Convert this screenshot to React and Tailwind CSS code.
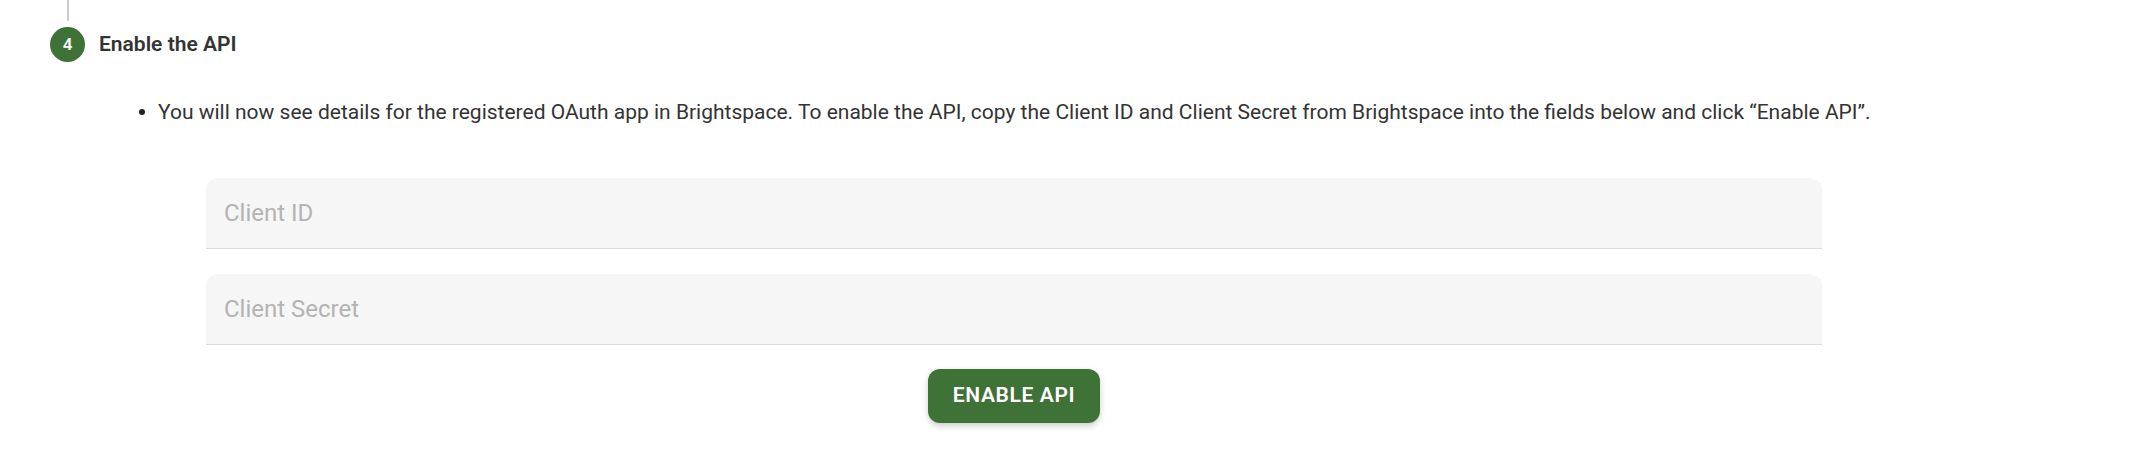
import React, { useState } from 'react'

function StepField({ placeholder, value, onChange }) {
  return (
    <div className="h-[71px] bg-[#f6f6f6] rounded-t-[12px] border-b border-[#dcdcdc] flex items-center">
      <input
        type="text"
        value={value}
        onChange={(e) => onChange(e.target.value)}
        placeholder={placeholder}
        className="w-full h-full bg-transparent outline-none pl-[18px] pr-[18px] text-[24px] text-[#333] placeholder:text-[#b3b3b3]"
      />
    </div>
  )
}

export default function App() {
  const [clientId, setClientId] = useState('')
  const [clientSecret, setClientSecret] = useState('')

  return (
    <div className="w-[2152px] h-[462px] bg-white font-['Roboto','Liberation_Sans',sans-serif] text-[#333]">
      {/* connector from previous step */}
      <div className="ml-[67px] w-[2px] h-[21px] bg-[#cfcfcf]" />

      {/* Step header */}
      <div className="mt-[6px] ml-[50px] flex items-center">
        <div className="w-[35px] h-[35px] rounded-full bg-[#3f7237] text-white flex items-center justify-center text-[17px] font-semibold">
          4
        </div>
        <h2 className="ml-[14px] text-[21px] font-semibold text-[#333]">Enable the API</h2>
      </div>

      {/* Instructions */}
      <div className="mt-[36px] flex items-center h-[28px]">
        <span className="ml-[139px] w-[6px] h-[6px] rounded-full bg-[#222]" />
        <p className="ml-[13px] text-[21px] leading-[28px] text-[#333]">
          You will now see details for the registered OAuth app in Brightspace. To enable the API, copy the Client ID and Client Secret from Brightspace into the fields below and click “Enable API”.
        </p>
      </div>

      {/* Form */}
      <div className="mt-[52px] ml-[206px] w-[1616px] flex flex-col">
        <StepField placeholder="Client ID" value={clientId} onChange={setClientId} />
        <div className="mt-[25px]">
          <StepField placeholder="Client Secret" value={clientSecret} onChange={setClientSecret} />
        </div>
        <div className="mt-[24px] flex justify-center">
          <button className="w-[172px] h-[54px] rounded-[12px] bg-[#3f7237] text-white text-[21px] font-semibold tracking-[0.03em] shadow-[0_3px_6px_rgba(0,0,0,0.2)]">
            ENABLE API
          </button>
        </div>
      </div>
    </div>
  )
}
